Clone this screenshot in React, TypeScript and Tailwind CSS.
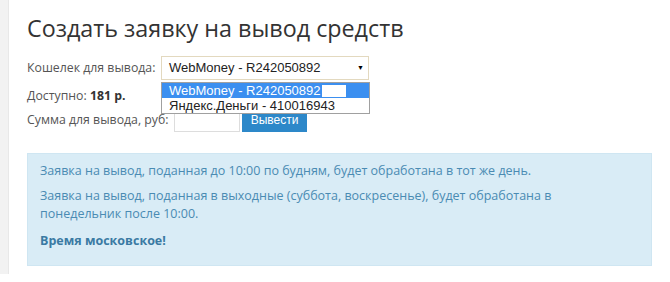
export default function App() {
  return (
    <div className="w-[670px] h-[282px] bg-white flex font-['Open_Sans',sans-serif]">
      <div className="w-[9px] h-[274px] shrink-0 bg-[#f2f2f2] border-r border-[#e8e8e8]" />
      <div className="flex-1 pl-[18px] pr-[18px]">
        <h1 className="mt-[13px] text-[23.3px] leading-[30px] text-[#333] whitespace-nowrap">
          Создать заявку на вывод средств
        </h1>

        <div className="mt-[13px] flex items-center h-[24px] text-[12.3px] text-[#555] whitespace-nowrap">
          <span className="w-[134px] shrink-0">Кошелек для вывода:</span>
          <div className="relative">
            <div className="w-[208px] h-[24px] border border-[#e3d9bf] bg-white flex items-center justify-between pl-[7px] pr-[4px] font-['Liberation_Sans',Arial,sans-serif] text-[13px] text-[#222]">
              <span>WebMoney - R242050892</span>
              <span className="text-[7px] text-black">▼</span>
            </div>
            <div className="absolute left-0 top-[26px] w-[209px] border border-[#a0a0a0] bg-white z-10 font-['Liberation_Sans',Arial,sans-serif] text-[13px] leading-[14px]">
              <div className="bg-[#3b8ff0] text-white h-[15px] pl-[7px] flex items-center">
                WebMoney - R242050892
                <span className="inline-block w-[24px] h-[12px] bg-white ml-[1px]" />
              </div>
              <div className="text-[#222] h-[15px] pl-[7px] flex items-center">
                Яндекс.Деньги - 410016943
              </div>
            </div>
          </div>
        </div>

        <div className="mt-[4px] h-[24px] flex items-center text-[12.3px] text-[#555] whitespace-nowrap">
          Доступно:&nbsp;<b className="text-[#333]">181 р.</b>
        </div>

        <div className="h-[24px] flex items-center text-[12.3px] text-[#555] whitespace-nowrap">
          <span className="w-[147px] shrink-0">Сумма для вывода, руб:</span>
          <div className="w-[66px] h-[24px] shrink-0 border border-[#ddd] bg-white" />
          <button className="ml-[2px] w-[65px] h-[23px] shrink-0 bg-[#2d88c9] text-white text-[12px] font-['Liberation_Sans',Arial,sans-serif]">
            Вывести
          </button>
        </div>

        <div className="mt-[21px] w-[625px] h-[113px] bg-[#d9ecf6] border border-[#cfe6f2] px-[12px] pt-[8px] text-[12.5px] text-[#4a8bb3]">
          <p className="leading-[18px]">
            Заявка на вывод, поданная до 10:00 по будням, будет обработана в тот же день.
          </p>
          <p className="mt-[7px] leading-[18px] w-[530px]">
            Заявка на вывод, поданная в выходные (суббота, воскресенье), будет обработана в понедельник после 10:00.
          </p>
          <p className="mt-[9px] leading-[18px] font-bold text-[#3a7aa3]">Время московское!</p>
        </div>
      </div>
    </div>
  );
}
